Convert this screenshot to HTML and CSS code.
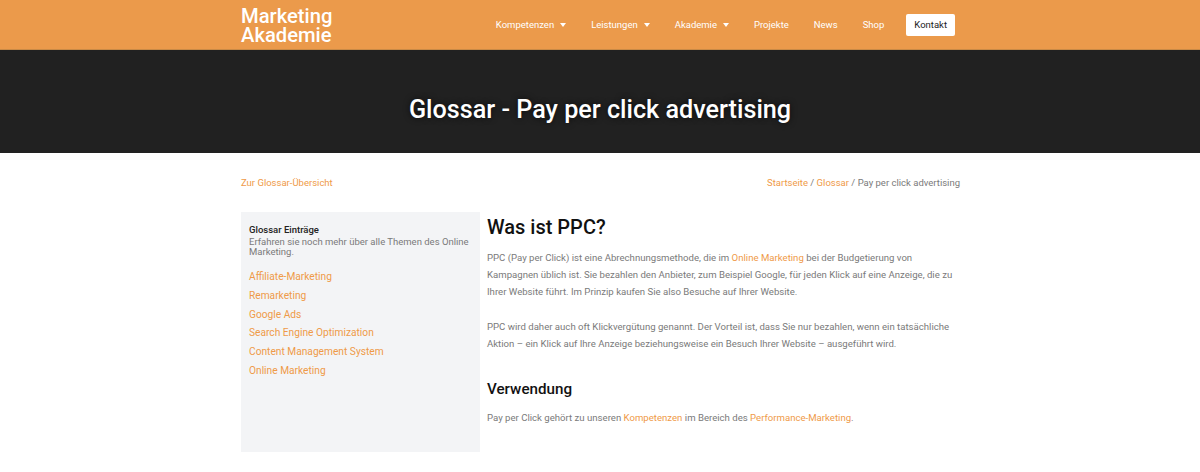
FILE: index.html
```html
<!DOCTYPE html>
<html lang="de">
<head>
<meta charset="utf-8">
<title>Glossar - Pay per click advertising</title>
<link rel="stylesheet" href="styles.css">
</head>
<body>
<header class="topbar">
  <div class="container topbar-inner">
    <a class="logo" href="#">Marketing<br>Akademie</a>
    <nav class="nav">
      <a href="#" class="nav-item">Kompetenzen <span class="caret"></span></a>
      <a href="#" class="nav-item">Leistungen <span class="caret"></span></a>
      <a href="#" class="nav-item">Akademie <span class="caret"></span></a>
      <a href="#" class="nav-item">Projekte</a>
      <a href="#" class="nav-item">News</a>
      <a href="#" class="nav-item">Shop</a>
      <a href="#" class="btn-contact">Kontakt</a>
    </nav>
  </div>
</header>
<section class="hero">
  <h1>Glossar - Pay per click advertising</h1>
</section>
<main class="container">
  <div class="crumbs">
    <a href="#" class="link">Zur Glossar-Übersicht</a>
    <div class="breadcrumb"><a href="#" class="link">Startseite</a> / <a href="#" class="link">Glossar</a> / Pay per click advertising</div>
  </div>
  <div class="layout">
    <aside class="sidebar">
      <div class="side-title">Glossar Einträge</div>
      <div class="side-desc">Erfahren sie noch mehr über alle Themen des Online Marketing.</div>
      <ul class="side-list">
        <li><a href="#">Affiliate-Marketing</a></li>
        <li><a href="#">Remarketing</a></li>
        <li><a href="#">Google Ads</a></li>
        <li><a href="#">Search Engine Optimization</a></li>
        <li><a href="#">Content Management System</a></li>
        <li><a href="#">Online Marketing</a></li>
      </ul>
    </aside>
    <article class="content">
      <h2>Was ist PPC?</h2>
      <p>PPC (Pay per Click) ist eine Abrechnungsmethode, die im <a href="#" class="link">Online Marketing</a> bei der Budgetierung von Kampagnen üblich ist. Sie bezahlen den Anbieter, zum Beispiel Google, für jeden Klick auf eine Anzeige, die zu Ihrer Website führt. Im Prinzip kaufen Sie also Besuche auf Ihrer Website.</p>
      <p>PPC wird daher auch oft Klickvergütung genannt. Der Vorteil ist, dass Sie nur bezahlen, wenn ein tatsächliche Aktion – ein Klick auf Ihre Anzeige beziehungsweise ein Besuch Ihrer Website – ausgeführt wird.</p>
      <h3>Verwendung</h3>
      <p>Pay per Click gehört zu unseren <a href="#" class="link">Kompetenzen</a> im Bereich des <a href="#" class="link">Performance-Marketing</a>.</p>
    </article>
  </div>
</main>
</body>
</html>
```
FILE: styles.css
```css
* { box-sizing: border-box; }
html, body { margin: 0; padding: 0; }
body {
  font-family: Roboto, "Liberation Sans", Arial, sans-serif;
  background: #fff;
  color: #7a7a7a;
  height: 472px;
  overflow: hidden;
}
a { text-decoration: none; }
.container { width: 720px; margin: 0 auto; }
.topbar {
  background: #eb9a4b;
  height: 50px;
  border-bottom: 1px solid #c98a46;
}
.topbar-inner {
  display: flex;
  align-items: center;
  justify-content: space-between;
  height: 49px;
}
.logo {
  color: #fff;
  font-weight: 500;
  font-size: 20.2px;
  line-height: 19px;
  padding-top: 3px;
  margin-left: 1px;
}
.nav { display: flex; align-items: center; }
.nav-item {
  color: #fff;
  font-size: 9.5px;
  margin-right: 25px;
  display: flex;
  align-items: center;
}
.caret {
  display: inline-block;
  width: 0; height: 0;
  border-left: 3.5px solid transparent;
  border-right: 3.5px solid transparent;
  border-top: 4px solid #fff;
  margin-left: 6px;
}
.btn-contact {
  background: #fff;
  color: #222;
  font-size: 9.5px;
  padding: 6px 8px;
  border-radius: 2px;
  line-height: 10px;
  margin-right: 5px;
  margin-left: -3px;
}
.hero {
  background: #212121;
  height: 103px;
  display: flex;
  align-items: center;
  justify-content: center;
}
.hero h1 {
  margin: 0;
  color: #fff;
  font-size: 25.2px;
  font-weight: 500;
  text-shadow: 0 0 6px rgba(0,0,0,0.7);
  padding-top: 16px;
}
.crumbs {
  display: flex;
  justify-content: space-between;
  font-size: 9.5px;
  padding-top: 23px;
  line-height: 14px;
  color: #7a7a7a;
  padding-left: 1px;
}
.link { color: #ef9a48; }
.layout {
  display: flex;
  margin-top: 22px;
  gap: 7px;
}
.sidebar {
  width: 239px;
  flex: none;
  background: #f3f4f6;
  height: 240px;
  padding: 12px 8px;
  margin-left: 1px;
}
.side-title {
  color: #222;
  font-size: 9.5px;
  font-weight: 500;
  line-height: 12px;
}
.side-desc {
  font-size: 9.5px;
  line-height: 10px;
  margin-top: 1px;
  color: #7a7a7a;
}
.side-list { list-style: none; margin: 11px 0 0; padding: 0; }
.side-list li { line-height: 18.8px; font-size: 10.2px; }
.side-list a { color: #ef9a48; }
.content { flex: 1; padding-top: 3px; }
.content h2 {
  margin: 0 0 10px;
  color: #111;
  font-size: 20px;
  font-weight: 500;
  line-height: 24px;
}
.content p {
  margin: 0 0 18px;
  font-size: 9.6px;
  line-height: 17px;
  color: #7a7a7a;
}
.content h3 {
  margin: 27px 0 10px;
  color: #111;
  font-size: 15.2px;
  font-weight: 500;
  line-height: 20px;
}
```
